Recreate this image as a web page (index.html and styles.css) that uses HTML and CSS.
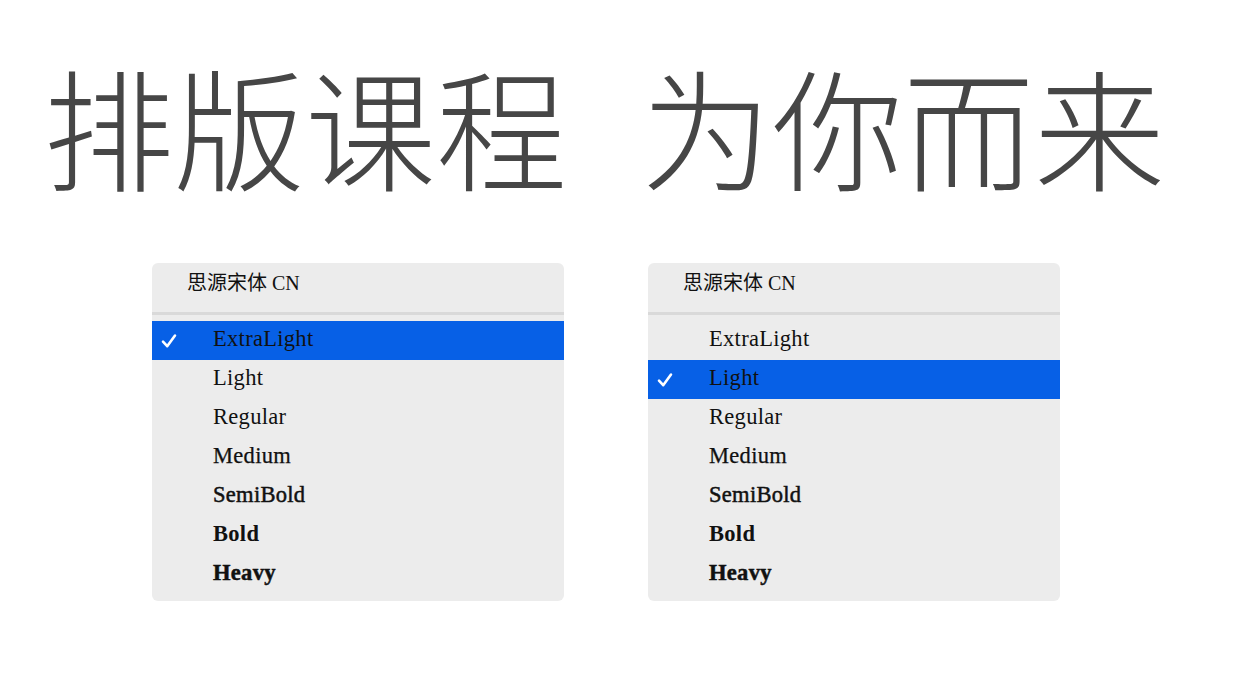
FILE: index.html
```html
<!DOCTYPE html>
<html lang="zh-CN">
<head>
<meta charset="utf-8">
<title>排版课程 为你而来</title>
<link rel="stylesheet" href="styles.css">
</head>
<body>
<div class="page">
  <h1 class="title"><span>排版课程</span><span>为你而来</span></h1>
  <div class="menus">
    <div class="menu">
      <div class="menu-head">思源宋体 CN</div>
      <div class="sep"></div>
      <ul class="items">
        <li class="item selected"><svg class="check" viewBox="0 0 18 18" width="18" height="18"><path d="M3 9.6 L7.2 14.2 L15 3.6" fill="none" stroke="#fff" stroke-width="2.6" stroke-linecap="round" stroke-linejoin="round"/></svg><span class="w-xl">ExtraLight</span></li>
        <li class="item"><span class="w-l">Light</span></li>
        <li class="item"><span class="w-r">Regular</span></li>
        <li class="item"><span class="w-m">Medium</span></li>
        <li class="item"><span class="w-sb">SemiBold</span></li>
        <li class="item"><span class="w-b">Bold</span></li>
        <li class="item"><span class="w-h">Heavy</span></li>
      </ul>
    </div>
    <div class="menu">
      <div class="menu-head">思源宋体 CN</div>
      <div class="sep"></div>
      <ul class="items">
        <li class="item"><span class="w-xl">ExtraLight</span></li>
        <li class="item selected"><svg class="check" viewBox="0 0 18 18" width="18" height="18"><path d="M3 9.6 L7.2 14.2 L15 3.6" fill="none" stroke="#fff" stroke-width="2.6" stroke-linecap="round" stroke-linejoin="round"/></svg><span class="w-l">Light</span></li>
        <li class="item"><span class="w-r">Regular</span></li>
        <li class="item"><span class="w-m">Medium</span></li>
        <li class="item"><span class="w-sb">SemiBold</span></li>
        <li class="item"><span class="w-b">Bold</span></li>
        <li class="item"><span class="w-h">Heavy</span></li>
      </ul>
    </div>
  </div>
</div>
</body>
</html>
```
FILE: styles.css
```css
html, body {
  margin: 0;
  padding: 0;
  background: #ffffff;
}
.page {
  width: 1257px;
  height: 677px;
  overflow: hidden;
}
.title {
  margin: 0;
  padding: 46px 0 0 43px;
  display: flex;
  gap: 74px;
  font-family: "Noto Sans CJK SC", "Noto Sans CJK JP", sans-serif;
  font-weight: 300;
  font-size: 131px;
  line-height: 156px;
  color: #464646;
  white-space: nowrap;
}
.menus {
  display: flex;
  gap: 84px;
  padding: 61px 0 0 152px;
}
.menu {
  width: 412px;
  background: #ececec;
  border-radius: 6px;
  padding-bottom: 7px;
}
.menu-head {
  height: 49px;
  box-sizing: border-box;
  padding: 7px 0 0 35px;
  font-family: "Liberation Serif", "Noto Sans CJK SC", serif;
  font-size: 20px;
  line-height: 26px;
  color: #111;
}
.sep {
  height: 3px;
  background: #d9d9d9;
}
.items {
  list-style: none;
  margin: 0;
  padding: 6px 0 0 0;
}
.item {
  position: relative;
  height: 39px;
  box-sizing: border-box;
  padding: 0 0 4px 61px;
  display: flex;
  align-items: center;
  font-family: "Liberation Serif", serif;
  font-size: 22.5px;
  letter-spacing: 0.3px;
  color: #111;
}
.item.selected {
  background: #0760e6;
}
.check {
  position: absolute;
  left: 8px;
  top: 11px;
}
.w-xl { font-weight: 400; }
.w-l { font-weight: 400; }
.w-r { font-weight: 400; }
.w-m { font-weight: 400; -webkit-text-stroke: 0.25px #111; }
.w-sb { font-weight: 400; -webkit-text-stroke: 0.5px #111; }
.w-b { font-weight: 700; }
.w-h { font-weight: 700; -webkit-text-stroke: 0.5px #111; }
```
